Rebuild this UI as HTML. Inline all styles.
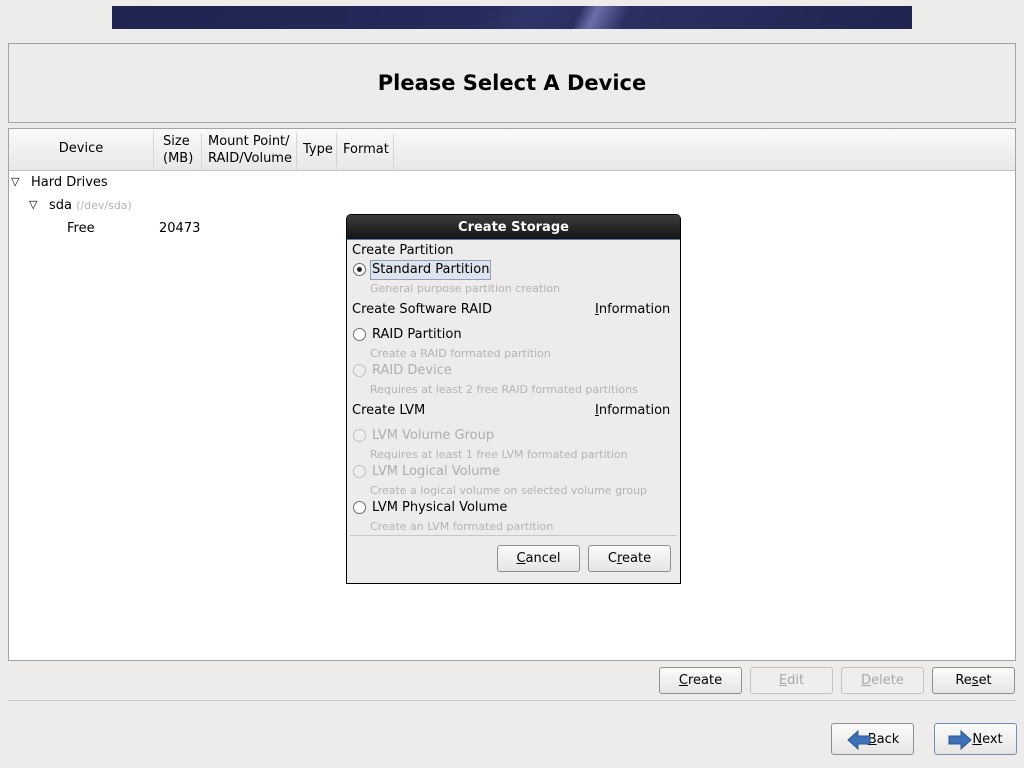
<!DOCTYPE html>
<html><head><meta charset="utf-8"><style>
*{margin:0;padding:0;box-sizing:border-box}
body{width:1024px;height:768px;background:#edeceb;font-family:"DejaVu Sans","Liberation Sans",sans-serif;font-size:13px;color:#000;position:relative;overflow:hidden}
.a{position:absolute;white-space:nowrap}
.btn{position:absolute;height:27px;border:1px solid #8f8f8d;border-radius:3px;background:linear-gradient(#fbfbfa,#e6e5e3);text-align:center;line-height:26px;font-size:13px}
.dis{color:#a8a8a6;border-color:#c4c3c1;background:#efeeec}
.g{color:#aeaeac}
.gs{color:#b3b3b1;font-size:11px}
.radio{position:absolute;width:13px;height:13px;border:1px solid #6e6e6c;border-radius:50%;background:#fff}
.radio.d{border-color:#c0bfbd;background:#efeeec}
.hd{position:absolute;top:133px;height:36px;border-right:1px solid #d6d5d3;line-height:17px}
u{text-decoration:underline}
</style></head><body>
<div class="a" style="left:112px;top:6px;width:800px;height:23px;background:linear-gradient(115deg,#1f2550 0%,#242a5a 45%,#2e3568 52%,#2a3062 58%,#6a6fa8 60%,#2a3062 64%,#1f2550 100%)"></div>
<div class="a" style="left:8px;top:43px;width:1008px;height:80px;border:1px solid #a4a3a1;background:#edeceb"></div>
<div class="a" style="left:0;top:71px;width:1024px;text-align:center;font-weight:bold;font-size:21px">Please Select A Device</div>
<div class="a" style="left:8px;top:128px;width:1008px;height:533px;border:1px solid #a4a3a1;background:#fff"></div>
<div class="a" style="left:9px;top:129px;width:1006px;height:42px;background:linear-gradient(#fafaf9,#e8e7e5);border-bottom:1px solid #c5c4c2"></div>
<div class="hd" style="left:9px;width:145px;text-align:center;line-height:36px;top:131px">Device</div>
<div class="hd" style="left:154px;width:48px;padding-left:9px;top:133px">Size<br>(MB)</div>
<div class="hd" style="left:202px;width:95px;padding-left:6px">Mount Point/<br>RAID/Volume</div>
<div class="hd" style="left:297px;width:40px;padding-left:6px;line-height:34px">Type</div>
<div class="hd" style="left:337px;width:57px;padding-left:6px;line-height:34px">Format</div>
<div class="a" style="left:11px;top:175px;font-size:11px">▽</div>
<div class="a" style="left:31px;top:175px">Hard Drives</div>
<div class="a" style="left:29px;top:198px;font-size:11px">▽</div>
<div class="a" style="left:49px;top:198px">sda <span class="gs">(/dev/sda)</span></div>
<div class="a" style="left:67px;top:221px">Free</div>
<div class="a" style="left:159px;top:221px">20473</div>

<div class="a" style="left:346px;top:214px;width:335px;height:370px;border:1px solid #000;background:#edeceb;border-radius:5px 5px 0 0"></div>
<div class="a" style="left:347px;top:215px;width:333px;height:24px;background:linear-gradient(#3c3c3c,#141414);border-radius:4px 4px 0 0;color:#fff;font-weight:bold;text-align:center;line-height:25px">Create Storage</div>
<div class="a" style="left:347px;top:239px;width:333px;height:1px;background:#5a7aa8"></div>
<div class="a" style="left:352px;top:243px">Create Partition</div>
<div class="radio" style="left:353px;top:263px"><div style="position:absolute;left:3px;top:3px;width:5px;height:5px;border-radius:50%;background:#222"></div></div>
<div class="a" style="left:370px;top:260px;height:20px;padding:0 1px;border:1px solid #8aa0c0;background:#dde4ee;line-height:18px">Standard Partition</div>
<div class="a gs" style="left:370px;top:282px">General purpose partition creation</div>
<div class="a" style="left:352px;top:302px">Create Software RAID</div>
<div class="a" style="left:595px;top:302px"><u>I</u>nformation</div>
<div class="radio" style="left:353px;top:328px"></div>
<div class="a" style="left:372px;top:327px">RAID Partition</div>
<div class="a gs" style="left:370px;top:347px">Create a RAID formated partition</div>
<div class="radio d" style="left:353px;top:364px"></div>
<div class="a g" style="left:372px;top:363px">RAID Device</div>
<div class="a gs" style="left:370px;top:383px">Requires at least 2 free RAID formated partitions</div>
<div class="a" style="left:352px;top:403px">Create LVM</div>
<div class="a" style="left:595px;top:403px"><u>I</u>nformation</div>
<div class="radio d" style="left:353px;top:429px"></div>
<div class="a g" style="left:372px;top:428px">LVM Volume Group</div>
<div class="a gs" style="left:370px;top:448px">Requires at least 1 free LVM formated partition</div>
<div class="radio d" style="left:353px;top:465px"></div>
<div class="a g" style="left:372px;top:464px">LVM Logical Volume</div>
<div class="a gs" style="left:370px;top:484px">Create a logical volume on selected volume group</div>
<div class="radio" style="left:353px;top:501px"></div>
<div class="a" style="left:372px;top:500px">LVM Physical Volume</div>
<div class="a gs" style="left:370px;top:520px">Create an LVM formated partition</div>
<div class="a" style="left:350px;top:535px;width:327px;height:1px;background:#c8c7c5"></div>
<div class="btn" style="left:497px;top:545px;width:83px"><u>C</u>ancel</div>
<div class="btn" style="left:588px;top:545px;width:83px">C<u>r</u>eate</div>

<div class="btn" style="left:659px;top:667px;width:83px"><u>C</u>reate</div>
<div class="btn dis" style="left:750px;top:667px;width:83px"><u>E</u>dit</div>
<div class="btn dis" style="left:841px;top:667px;width:83px"><u>D</u>elete</div>
<div class="btn" style="left:932px;top:667px;width:83px">Re<u>s</u>et</div>
<div class="a" style="left:8px;top:700px;width:1008px;height:1px;background:#c8c7c5"></div>
<div class="btn" style="left:831px;top:723px;width:83px;height:32px;line-height:31px;padding-left:22px"><svg style="position:absolute;left:15px;top:6px" width="24" height="20" viewBox="0 0 24 20"><path d="M1 10 L11 1 V6 H23 V14 H11 V19 Z" fill="#3d72b8" stroke="#2a5590"/></svg><u>B</u>ack</div>
<div class="btn" style="left:934px;top:723px;width:83px;height:32px;line-height:31px;padding-left:24px;border-color:#6f8fb8"><svg style="position:absolute;left:13px;top:6px" width="24" height="20" viewBox="0 0 24 20"><path d="M23 10 L13 1 V6 H1 V14 H13 V19 Z" fill="#3d72b8" stroke="#2a5590"/></svg><u>N</u>ext</div>
</body></html>
